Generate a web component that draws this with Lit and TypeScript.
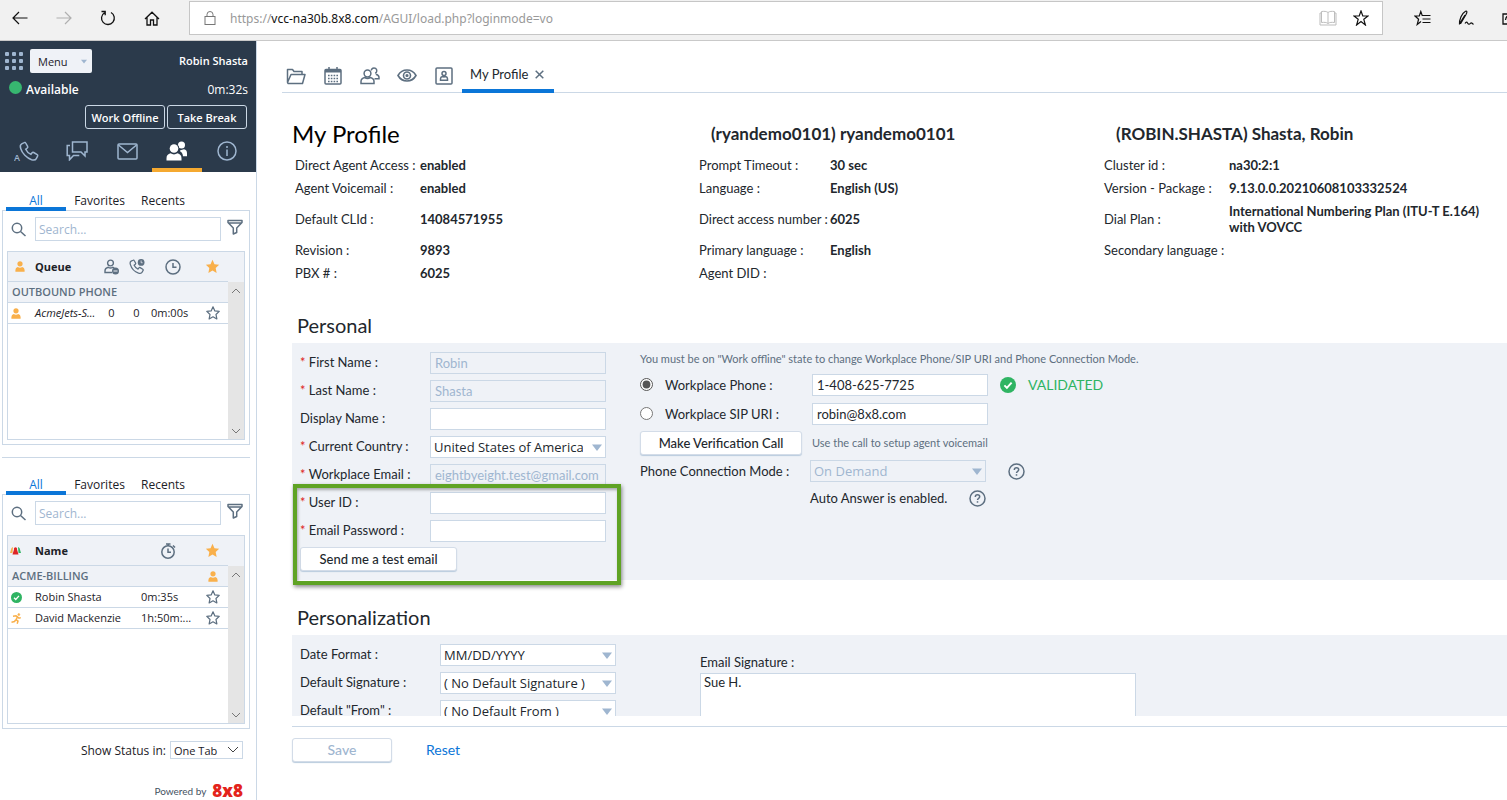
import { LitElement, html, css, svg, nothing } from "lit";
import { customElement, property } from "lit/decorators.js";

const personSolid = (cls = "") => html`<svg class="ico ${cls}" width="10" height="11" viewBox="0 0 10 11" fill="#f9b04b" aria-hidden="true"><circle cx="5" cy="2.8" r="2.6"/><path d="M.4 10.8V9a3 3 0 0 1 2.4-2.900c1.300 1 3.100 1 4.400 0A3 3 0 0 1 9.600 9v1.800z"/></svg>`;

const starPath = "M8 .9l2.1 4.7 5 .6-3.7 3.5 1 5.1L8 12.3l-4.4 2.5 1-5.1L.9 6.2l5-.6z";
const starSolid = html`<svg class="ico" width="15" height="15" viewBox="0 0 16 16" aria-hidden="true"><path d="${starPath}" fill="#f9b04b"/></svg>`;
const starLine = html`<svg class="ico" width="14" height="14" viewBox="0 0 16 16" aria-hidden="true"><path d="${starPath}" fill="none" stroke="#5d6f80" stroke-width="1.4" stroke-linejoin="round"/></svg>`;

const phonePath = "M5.2 1.6 2.7 2.8C1.2 3.6 1.1 5.6 1.7 7.5c1.4 4.8 6 9.6 10.9 11.2 2 .6 3.9.5 4.7-1.1l1.3-2.4c.3-.6.1-1.200-.4-1.500l-3.500-2.200c-.5-.3-1.200-.2-1.600.3l-1.200 1.600c-2.200-.9-4.200-2.900-5.200-5.100l1.600-1.300c.5-.4.6-1 .3-1.600L6.700 2c-.3-.6-1-.7-1.500-.4z";

const chevron = (up: boolean) => html`<svg width="10" height="6" viewBox="0 0 10 6" fill="none" stroke="#777" aria-hidden="true"><path d="${up ? "M1 5l4-4 4 4" : "M1 1l4 4 4-4"}"/></svg>`;

const triangle = html`<svg class="tri" width="10" height="7" viewBox="0 0 10 7" aria-hidden="true"><path d="M0 .5h10L5 7z" fill="#9fb6d0"/></svg>`;

const clock = html`<svg class="ico" width="16" height="16" viewBox="0 0 16 16" fill="none" stroke="#5d6f80" stroke-width="1.5" aria-hidden="true"><circle cx="8" cy="8" r="7"/><path d="M8 4v4.300h3.500"/></svg>`;

const checkDisc = (size: number) => html`<svg class="ico" width="${size}" height="${size}" viewBox="0 0 16 16" aria-hidden="true"><circle cx="8" cy="8" r="8" fill="#2fb463"/><path d="M4.400 8.400l2.500 2.500 4.700-5.200" fill="none" stroke="#fff" stroke-width="1.9"/></svg>`;

const help = html`<svg class="help" width="17" height="17" viewBox="0 0 17 17" fill="none" stroke="#5d6f80" stroke-width="1.5" role="img" aria-label="Help"><circle cx="8.500" cy="8.500" r="7.500"/><path d="M6.300 6.900c0-1.400 1-2.200 2.200-2.200s2.200.8 2.200 2c0 1.500-2.200 1.700-2.200 3.300"/><path d="M8.500 11.200v1.500"/></svg>`;

const base = css`
  * { box-sizing: border-box; }
  svg { display: block; flex: none; }
  button, input, select, textarea { font: inherit; color: inherit; margin: 0; }
  button { cursor: pointer; }
  a { text-decoration: none; }
`;

@customElement("browser-bar")
export class BrowserBar extends LitElement {
  static styles = [base, css`
    :host { display: flex; align-items: center; height: 41px; flex: none; box-sizing: border-box; background: #f1f1f1; border-bottom: 1px solid #c9c9c9; font-family: "Noto Sans", sans-serif; overflow: hidden; }
    .nav { display: flex; gap: 20px; padding: 0 0 4px 8px; width: 189px; flex: none; }
    .nav button, .tools button { width: 24px; height: 24px; padding: 0; border: 0; background: none; display: grid; place-items: center; flex: none; }
    .address { flex: 1; display: flex; align-items: center; gap: 14px; height: 34px; margin-bottom: 4px; padding: 0 13px 0 14px; background: #fff; border: 1px solid #c6c6c6; }
    .url { flex: 1; font-size: 12px; color: #999; white-space: nowrap; }
    .url b { font-weight: 400; color: #111; }
    .marks { display: flex; gap: 16px; }
    .tools { display: flex; gap: 20px; width: 124px; padding: 0 0 4px 27px; flex: none; overflow: hidden; }
  `];
  render() {
    return html`
      <div class="nav">
        <button aria-label="Back"><svg width="16" height="14" viewBox="0 0 16 14" fill="none" stroke="#111" stroke-width="1.2"><path d="M7 1L1 7l6 6M1 7h14.500"/></svg></button>
        <button aria-label="Forward"><svg width="16" height="14" viewBox="0 0 16 14" fill="none" stroke="#b0b0b0" stroke-width="1.2"><path d="M9 1l6 6-6 6M15 7H.5"/></svg></button>
        <button aria-label="Refresh"><svg width="16" height="16" viewBox="0 0 16 16" fill="none" stroke="#111" stroke-width="1.3"><path d="M4.500 2.700a6.400 6.400 0 1 0 6.500-.2M1.500 1.500h3.700v3.700"/></svg></button>
        <button aria-label="Home"><svg width="16" height="15" viewBox="0 0 16 15" fill="none" stroke="#111" stroke-width="1.3"><path d="M1 8l7-6.800L15 8M3 6.500V14h3.500V9h3v5H13V6.500"/></svg></button>
      </div>
      <div class="address">
        <svg width="12" height="14" viewBox="0 0 12 14" fill="none" stroke="#777"><rect x="1" y="5.500" width="10" height="8"/><path d="M3 5.500V3.500a3 3 0 0 1 6 0v2"/></svg>
        <span class="url">https://<b>vcc-na30b.8x8.com</b>/AGUI/load.php?loginmode=vo</span>
        <div class="marks">
          <svg width="18" height="16" viewBox="0 0 18 16" fill="none" stroke="#bdbdbd"><path d="M9 2.500C7.500 1.200 5 1.200 2.500 1.500v11c2.500-.3 5-.3 6.500 1 1.500-1.300 4-1.300 6.500-1v-11C13 1.200 10.500 1.200 9 2.500zM9 2.500v11M2.500 3H1v12h16V3h-1.500"/></svg>
          <svg width="16" height="16" viewBox="0 0 16 16" fill="none" stroke="#111" stroke-width="1.2"><path d="M8 1l1.800 5H15l-4.200 3.300L12.400 15 8 11.600 3.600 15l1.600-5.700L1 6h5.200z"/></svg>
        </div>
      </div>
      <div class="tools">
        <button aria-label="Favorites"><svg width="17" height="16" viewBox="0 0 17 16" fill="none" stroke="#111" stroke-width="1.2"><path d="M10 5.500H8.200L6.800 1.500 5.300 6H1l3.600 3.200L3.200 14.500 7 11.500M9 5.500h7.500M8.500 9h8M8.500 12.500h8"/></svg></button>
        <button aria-label="Notes"><svg width="18" height="16" viewBox="0 0 18 16" fill="none" stroke="#111" stroke-width="1.2"><path d="M2.500 14.500C2 10 5 3 8.500 1.200c2-.7 1.500 1.500.5 3.300L4 13c-1 1.200-1-.5.500-2.500L8 5M8 13.500c1.200-2 2-1.500 2.700-.3s1.800 1.300 2.600.3 2-.5 3.200 1"/></svg></button>
        <button aria-label="Share"><svg width="16" height="14" viewBox="0 0 16 14" fill="none" stroke="#111" stroke-width="1.3"><path d="M5 3H1v10h13V8M3.500 9c.5-4 3-5.500 7-5.500M8 .5l3.500 3L8 6.500"/></svg></button>
      </div>`;
  }
}

interface Member { icon: unknown; cells: string[]; }

@customElement("contact-panel")
export class ContactPanel extends LitElement {
  @property() kind: "queue" | "agents" = "queue";
  static styles = [base, css`
    :host { display: block; padding: 0 6px 0 2px; font-size: 12px; color: #1c2127; }
    .tabs { display: flex; height: 17px; padding-left: 4px; }
    .tabs button { border: 0; padding: 0; background: none; line-height: 13px; width: 67px; text-align: center; border-bottom: 4px solid transparent; }
    .tabs .on { width: 60px; color: #0b76d8; border-color: #0b76d8; }
    .tabs .last { width: 60px; }
    .frame { border: 1px solid #cbd8e6; padding: 6px 4px 4px; margin-top: -1px; height: 235px; display: flex; flex-direction: column; gap: 10px; }
    .search { display: grid; grid-template-columns: 28px 1fr 24px; align-items: center; }
    .search .glass { margin-left: 4px; }
    .search input { height: 24px; width: 100%; border: 1px solid #cbd8e6; padding: 0 3px; outline: 0; background: #fff; }
    .search input::placeholder { color: #9fb6d0; opacity: 1; }
    .search button { border: 0; background: none; padding: 0 0 4px 6px; }
    .box { flex: 1; display: grid; grid-template-columns: 1fr; grid-template-rows: 1fr; border: 1px solid #cbd8e6; }
    table { grid-area: 1 / 1; align-self: start; width: 100%; table-layout: fixed; border-collapse: separate; border-spacing: 0; font-size: 11px; }
    th { height: 30px; background: #eff2f7; padding: 0; text-align: left; border-bottom: 1px solid #cbd8e6; }
    th:last-child { border-bottom: 0; }
    td { height: 21px; padding: 0; border-bottom: 1px solid #cbd8e6; white-space: nowrap; line-height: 20px; }
    td:last-child { border-bottom: 0; }
    .group td { background: #eff2f7; }
    .group td:first-child { color: #5d6f80; font-weight: 600; padding-left: 4px; }
    .mid { text-align: center; }
    .mid .ico { margin: 0 auto; }
    .lead .ico { margin-left: 3px; }
    th.lead .ico { margin-left: 7px; }
    th.lead .wide { margin-left: 2px; }
    .name { padding-left: 3px; }
    .italic { font-style: italic; }
    .time { padding-left: 2px; }
    .track { grid-area: 1 / 1; justify-self: end; width: 16px; margin-top: 30px; background: #e5e5e5; display: flex; flex-direction: column; justify-content: space-between; }
    .track button { border: 0; background: none; padding: 0; height: 17px; display: grid; place-items: center; }
    .c16 { width: 16px; } .c24 { width: 24px; } .c25 { width: 25px; } .c31 { width: 31px; } .c48 { width: 48px; } .c58 { width: 58px; }
  `];

  private queueTable() {
    return html`<table>
      <colgroup><col class="c24"><col><col class="c25"><col class="c25"><col class="c48"><col class="c31"><col class="c16"></colgroup>
      <thead><tr>
        <th class="lead">${personSolid()}</th>
        <th class="name">Queue</th>
        <th class="mid"><svg class="ico" width="15" height="16" viewBox="0 0 15 16" fill="none" stroke="#5d6f80" stroke-width="1.4"><circle cx="6.500" cy="4" r="2.900"/><path d="M8 13.500H1v-1.800C1 9.500 2.800 8.700 4.300 8.300c1.400.8 3 .8 4.400 0l1.600.6"/><circle cx="11.500" cy="12" r="3.500" fill="#5d6f80" stroke="none"/><path d="M9.500 12h4" stroke="#eff2f7" stroke-width="1"/></svg></th>
        <th class="mid"><svg class="ico" width="16" height="15" viewBox="0 0 21 20" fill="none" stroke="#5d6f80" stroke-width="1.7"><path d="${phonePath}"/><circle cx="16" cy="4.500" r="4.500" fill="#5d6f80" stroke="none"/><path d="M16 2v3h2" stroke="#eff2f7" stroke-width="1"/></svg></th>
        <th class="mid">${clock}</th>
        <th class="mid">${starSolid}</th>
        <th></th>
      </tr></thead>
      <tbody>
        <tr class="group"><td colspan="6">OUTBOUND PHONE</td><td></td></tr>
        <tr><td class="lead">${personSolid()}</td><td class="name italic">AcmeJets-S...</td><td class="mid">0</td><td class="mid">0</td><td class="time">0m:00s</td><td class="mid">${starLine}</td><td></td></tr>
      </tbody></table>`;
  }

  private agentTable() {
    const runner = html`<svg class="ico" width="11" height="11" viewBox="0 0 11 11" fill="none" stroke="#f9b04b" stroke-width="1.5"><circle cx="7.800" cy="1.600" r="1" fill="#f9b04b" stroke-width=".6"/><path d="M2 3.200l3-.4 1.500 1L5 6.700l2 1.300-.8 2.700M4.600 7L3.500 8.500.5 9.200M6.500 4l1.500 1.200 1.800-.6"/></svg>`;
    const rows: Member[] = [
      { icon: checkDisc(11), cells: ["Robin Shasta", "0m:35s"] },
      { icon: runner, cells: ["David Mackenzie", "1h:50m:..."] },
    ];
    return html`<table>
      <colgroup><col class="c24"><col><col class="c58"><col class="c31"><col class="c16"></colgroup>
      <thead><tr>
        <th class="lead"><svg class="ico wide" width="11" height="9" viewBox="0 0 11 9"><path d="M0 7L1.500 2 3 1 2.500 7z" fill="#f9b04b"/><path d="M11 7L9.500 2 8 1l.5 6z" fill="#2fb463"/><path d="M2.500 8.500L4 3.500a1.600 1.600 0 1 1 3 0l1.500 5z" fill="#dd2525"/></svg></th>
        <th class="name">Name</th>
        <th class="mid"><svg class="ico" width="15" height="16" viewBox="0 0 15 16" fill="none" stroke="#5d6f80" stroke-width="1.5"><circle cx="7" cy="9" r="6.200"/><path d="M7 5.500V9.300h3M5 1h4.500M7.200 1v2M12 2.500l2 2"/></svg></th>
        <th class="mid">${starSolid}</th>
        <th></th>
      </tr></thead>
      <tbody>
        <tr class="group"><td colspan="3">ACME-BILLING</td><td class="mid">${personSolid()}</td><td></td></tr>
        ${rows.map((r) => html`<tr><td class="lead">${r.icon}</td><td class="name">${r.cells[0]}</td><td class="time">${r.cells[1]}</td><td class="mid">${starLine}</td><td></td></tr>`)}
      </tbody></table>`;
  }

  render() {
    return html`
      <div class="tabs"><button class="on">All</button><button>Favorites</button><button class="last">Recents</button></div>
      <div class="frame">
        <div class="search">
          <svg class="glass" width="15" height="15" viewBox="0 0 15 15" fill="none" stroke="#5d6f80" stroke-width="1.5"><circle cx="6" cy="6" r="4.700"/><path d="M9.500 9.500l5 4.500"/></svg>
          <input type="text" placeholder="Search..." aria-label="Search">
          <button aria-label="Filter"><svg width="16" height="16" viewBox="0 0 16 16" fill="none" stroke="#5d6f80" stroke-width="1.5" stroke-linejoin="round"><path d="M1 1.500h14v2L9.700 9v4.500L6.300 15V9L1 3.500zM1 4h14"/></svg></button>
        </div>
        <div class="box">
          ${this.kind === "queue" ? this.queueTable() : this.agentTable()}
          <div class="track"><button aria-label="Scroll up">${chevron(true)}</button><button aria-label="Scroll down">${chevron(false)}</button></div>
        </div>
      </div>`;
  }
}

@customElement("agent-sidebar")
export class AgentSidebar extends LitElement {
  static styles = [base, css`
    :host { display: flex; flex-direction: column; box-sizing: border-box; width: 257px; flex: none; border-right: 1px solid #cbd8e6; background: #fff; font-family: "Open Sans", sans-serif; font-size: 12px; color: #1c2127; }
    .head { background: #2b3a4b; color: #fff; height: 131px; padding: 8px 8px 0 2px; display: flex; flex-direction: column; flex: none; }
    .row { display: flex; align-items: center; }
    .grid { margin: 0 7px 0 3px; }
    .menu { display: flex; align-items: center; justify-content: space-between; width: 62px; height: 24px; padding: 0 5px 0 8px; border: 0; border-radius: 2px; background: #eff2f7; color: #1c2127; font-size: 11px; }
    .menu .tri { width: 6px; height: 5px; }
    .who { margin-left: auto; padding-bottom: 2px; font-size: 11px; font-weight: 600; }
    .status { margin-top: 6px; height: 20px; }
    .dot { width: 13px; height: 13px; border-radius: 50%; background: #37b670; margin: 0 4px 4px 7px; }
    .status b { font-weight: 600; }
    .status time { margin-left: auto; }
    .actions { justify-content: flex-end; gap: 2px; margin: 6px 0 0; padding-right: 1px; }
    .actions button { width: 80px; height: 24px; padding: 0; border: 1px solid #cbd8e6; border-radius: 3px; background: none; font-weight: 600; font-size: 11px; white-space: nowrap; }
    .channels { display: flex; margin-top: auto; }
    .channels button { width: 50px; flex: none; height: 38px; border: 0; border-bottom: 4px solid transparent; background: none; padding: 0; display: grid; place-items: center; color: #9fb6d0; }
    .channels .on { border-color: #f5a930; color: #fff; }
    .channels text { font: 600 9px "Open Sans", sans-serif; }
    .lists { display: flex; flex-direction: column; padding-top: 22px; }
    .lists hr { border: 0; border-top: 1px solid #cbd8e6; margin: 12px 6px 20px 2px; }
    .show { display: flex; justify-content: flex-end; align-items: center; gap: 4px; margin: 12px 13px 0 0; }
    .pick { display: grid; align-items: center; width: 73px; }
    .pick select { grid-area: 1 / 1; appearance: none; width: 100%; height: 18px; padding: 0 3px; border: 1px solid #cbd8e6; border-radius: 0; background: #fff; font-size: 11px; }
    .pick svg { grid-area: 1 / 1; justify-self: end; margin-right: 4px; pointer-events: none; }
    .power { display: flex; align-items: center; justify-content: flex-end; gap: 6px; margin: 22px 13px 0 0; height: 19px; line-height: 14px; font-family: Lato, sans-serif; font-size: 10px; color: #45525f; }
    .logo { font: 800 17px "Open Sans", sans-serif; line-height: 19px; color: #e3231b; }
  `];
  render() {
    return html`
      <header class="head">
        <div class="row">
          <svg class="grid" width="18" height="18" viewBox="0 0 18 18" fill="#9fb6d0" aria-hidden="true">${[0, 7, 14].map((y) => [0, 7, 14].map((x) => svg`<rect x="${x}" y="${y}" width="4" height="4" rx="1"/>`))}</svg>
          <button class="menu">Menu ${triangle}</button>
          <span class="who">Robin Shasta</span>
        </div>
        <div class="row status"><span class="dot"></span><b>Available</b><time>0m:32s</time></div>
        <div class="row actions"><button>Work Offline</button><button>Take Break</button></div>
        <nav class="channels">
          <button aria-label="Phone"><svg width="26" height="23" viewBox="0 0 26 23" fill="none" stroke="currentColor" stroke-width="1.5"><g transform="translate(5 1)"><path d="${phonePath}"/></g><text x="0" y="21" fill="currentColor" stroke="none">A</text></svg></button>
          <button aria-label="Chat"><svg width="22" height="20" viewBox="0 0 22 20" fill="none" stroke="currentColor" stroke-width="1.5"><path d="M6.500 1H21v10h-2v4l-4-4H6.500zM4 4.500H1.200v10H3.500v4.300l4-4.300h5.800"/></svg></button>
          <button aria-label="Email"><svg width="21" height="17" viewBox="0 0 21 17" fill="none" stroke="currentColor" stroke-width="1.5"><rect x="1" y="1" width="19" height="15" rx="1"/><path d="M1.500 2l9 7.500 9-7.500"/></svg></button>
          <button class="on" aria-label="Contacts"><svg width="22" height="20" viewBox="0 0 22 20" fill="currentColor"><circle cx="15.500" cy="4" r="3.500"/><path d="M14 9.500C16 9 16.500 8.500 18 8.300c2 .5 3 1.700 3 4v3h-4c0-2-1.300-4.200-3-5z"/><circle cx="8" cy="7.500" r="5.300" fill="#2b3a4b"/><circle cx="8" cy="7.500" r="4.300"/><path d="M.5 19.500v-2.300C.5 14.500 2 13 4.500 12.300c2 1.500 5 1.500 7 0 2.500.7 4 2.200 4 4.900v2.300z"/></svg></button>
          <button aria-label="Information"><svg width="20" height="20" viewBox="0 0 20 20" fill="none" stroke="currentColor" stroke-width="1.5"><circle cx="10" cy="10" r="9"/><path d="M10 8.500v6.500M10 5v2"/></svg></button>
        </nav>
      </header>
      <div class="lists">
        <contact-panel kind="queue"></contact-panel>
        <hr>
        <contact-panel kind="agents"></contact-panel>
      </div>
      <div class="show">
        <label for="show">Show Status in:</label>
        <span class="pick"><select id="show"><option>One Tab</option></select><svg width="12" height="8" viewBox="0 0 12 8" fill="none" stroke="#444"><path d="M1 1l5 5 5-5"/></svg></span>
      </div>
      <footer class="power">Powered by <span class="logo">8x8</span></footer>`;
  }
}

interface Field { id: string; label: string; value?: string; required?: boolean; disabled?: boolean; select?: boolean; password?: boolean; }

@customElement("profile-page")
export class ProfilePage extends LitElement {
  static styles = [base, css`
    :host { display: flex; flex-direction: column; flex: 1; min-width: 0; background: #fff; font-family: Lato, sans-serif; font-size: 13px; line-height: 16px; color: #22272d; }
    .tabs { display: flex; align-items: flex-end; height: 52px; margin-left: 25px; border-bottom: 1px solid #cbd8e6; flex: none; }
    .tabs .icon { width: 37px; height: 33px; padding: 0 10px 0 0; border: 0; background: none; display: grid; place-items: center; color: #5d6f80; }
    .tabs .page { display: flex; align-items: center; gap: 7px; margin: 0 0 -1px -5px; padding: 0 8px; height: 34px; width: 92px; border-bottom: 4px solid #0b76d8; white-space: nowrap; }
    .page button { padding: 0; border: 0; background: none; }
    .body { flex: 1; min-height: 0; overflow: hidden; padding-left: 35px; }
    .info { display: grid; grid-template-columns: 404px 405px 1fr; padding: 26px 4px 0 3px; }
    .info h1, .info h2 { margin: 0 0 5px; height: 29px; line-height: 29px; white-space: nowrap; }
    .info h1 { font-size: 24px; font-weight: 400; color: #000; margin-left: -3px; }
    .info h2 { font-size: 17px; font-weight: 700; margin-left: 12px; }
    dl { margin: 0; display: grid; grid-template-columns: 125px 1fr; grid-template-rows: 23px 23px 39px 23px 23px; align-items: center; }
    dl.mid { grid-template-columns: 131px 1fr; }
    dt, dd { margin: 0; white-space: nowrap; }
    dd { font-weight: 700; white-space: normal; }
    h3 { margin: 0; padding-left: 5px; font-size: 20px; line-height: 24px; font-weight: 400; }
    .first { margin-top: 29px; }
    .next { margin-top: 25px; }
    .panel { background: #eff2f7; margin-top: 6px; padding: 9px 8px 0; display: grid; }
    .personal { grid-template-columns: 340px 1fr; height: 237px; }
    .prefs { grid-template-columns: 400px 1fr; }
    .fields { display: grid; grid-auto-rows: 22px; row-gap: 6px; grid-template-columns: 130px 176px; align-items: center; align-content: start; }
    .prefs .fields { grid-template-columns: 140px 176px; }
    .fields label { white-space: nowrap; padding-bottom: 2px; }
    .req { color: #d22; }
    input[type="text"], input[type="password"], .drop select { width: 176px; height: 22px; padding: 0 4px; border: 1px solid #cbd8e6; border-radius: 0; background: #fff; outline: 0; }
    input:disabled, .drop select:disabled { color: #9fb6d0; background: #eff2f7; opacity: 1; }
    .drop { display: grid; align-items: center; width: 176px; }
    .drop select { grid-area: 1 / 1; appearance: none; padding: 0 22px 0 3px; font-family: "Open Sans", sans-serif; }
    .drop svg { grid-area: 1 / 1; justify-self: end; margin-right: 4px; pointer-events: none; }
    .btn { height: 24px; padding: 0; border: 1px solid #d3dce8; border-radius: 3px; background: #fff; box-shadow: 0 1px 1px #b9cbdd; white-space: nowrap; font-weight: 500; }
    .send { width: 157px; grid-column: 1 / -1; }
    .phone { display: grid; grid-template-columns: 25px 147px 176px 1fr; align-items: center; align-content: start; grid-template-rows: 18px 29px 29px 29px 28px 26px; }
    .note { grid-column: 1 / -1; align-self: start; line-height: 14px; font-size: 11px; color: #5d6f80; }
    .phone input[type="radio"] { width: 13px; height: 13px; accent-color: #555; }
    .call { grid-column: 1 / 3; width: 162px; }
    .small { grid-column: 3 / -1; font-size: 11px; color: #5d6f80; }
    .mode { grid-column: 1 / 3; white-space: nowrap; }
    .conn { grid-column: 3 / -1; display: flex; align-items: center; margin-left: -2px; gap: 22px; }
    .valid { display: flex; align-items: center; gap: 12px; margin-left: 12px; color: #2fb463; font-size: 14px; }
    .sig { display: flex; flex-direction: column; padding-top: 10px; gap: 3px; }
    .sig textarea { width: 436px; height: 110px; resize: none; border: 1px solid #cbd8e6; border-radius: 0; padding: 0 3px; background: #fff; line-height: 16px; }
    .mark { position: absolute; left: -7px; right: -15px; top: -8px; bottom: -15px; border: 4px solid #5fa324; box-shadow: 1px 2px 4px rgba(0, 0, 0, .45), inset 1px 2px 3px rgba(0, 0, 0, .3); pointer-events: none; }
    .mail { position: relative; align-self: start; grid-column: 1 / -1; grid-row: span 3; display: grid; grid-template-columns: subgrid; grid-auto-rows: 22px; row-gap: 6px; align-items: center; }
    .foot { display: flex; align-items: flex-start; gap: 34px; height: 74px; margin: 10px 0 0 35px; padding-top: 11px; border-top: 1px solid #cbd8e6; flex: none; font-size: 14px; }
    .save { width: 100px; color: #9fb6d0; }
    .foot a { color: #0b76d8; line-height: 24px; }
  `];

  private field(f: Field) {
    return html`<label for=${f.id}>${f.required ? html`<span class="req">*</span> ` : nothing}${f.label} :</label>
      ${f.select
        ? html`<span class="drop"><select id=${f.id}><option>${f.value}</option></select>${triangle}</span>`
        : html`<input id=${f.id} type=${f.password ? "password" : "text"} .value=${f.value ?? ""} ?disabled=${f.disabled ?? false}>`}`;
  }

  private facts(cls: string, items: [string, string][]) {
    return html`<dl class=${cls}>${items.map(([k, v]) => html`<dt>${k} :</dt><dd>${v}</dd>`)}</dl>`;
  }

  render() {
    return html`
      <nav class="tabs">
        <button class="icon" aria-label="Files"><svg width="20" height="18" viewBox="0 0 20 18" fill="none" stroke="currentColor" stroke-width="1.5" stroke-linejoin="round"><path d="M1.500 15V2.500h5l1.500 2h8v3M1.500 15.500l3.500-8h14l-2.500 9H2.200z"/></svg></button>
        <button class="icon" aria-label="Calendar"><svg width="18" height="18" viewBox="0 0 18 18" fill="none" stroke="currentColor" stroke-width="1.5"><rect x="1" y="2.500" width="16" height="14.500" rx="1"/><path d="M1 4h16" stroke-width="3"/><path d="M5 0v4M13 0v4"/><path d="M4 8.500h11M4 11.500h11M4 14.500h11" stroke-dasharray="1.6 1.2"/></svg></button>
        <button class="icon" aria-label="Contacts"><svg width="20" height="19" viewBox="0 0 20 19" fill="none" stroke="currentColor" stroke-width="1.5"><circle cx="7.500" cy="7.500" r="3.400"/><path d="M1 17.500v-2c0-2.300 1.500-3.500 3.700-4 1.700 1.100 3.900 1.100 5.600 0 2.200.5 3.700 1.700 3.700 4v2zM11.200 4.500a2.800 2.800 0 1 1 4 2.800M15.800 8.200c2 .4 3.200 1.500 3.200 3.300v1.300h-4.500"/></svg></button>
        <button class="icon" aria-label="Watch"><svg width="20" height="13" viewBox="0 0 20 13" fill="none" stroke="currentColor" stroke-width="1.6"><path d="M1 6.500C3 3 6 1 10 1s7 2 9 5.500C17 10 14 12 10 12S3 10 1 6.500z"/><circle cx="10" cy="6.500" r="3.500"/><circle cx="10" cy="6.500" r=".8" fill="currentColor"/></svg></button>
        <button class="icon" aria-label="Profile"><svg width="18" height="18" viewBox="0 0 18 18" fill="none" stroke="currentColor" stroke-width="1.5"><rect x="1" y="1" width="16" height="16" rx="1"/><circle cx="9" cy="6.500" r="2"/><path d="M5.500 13.300v-1.500c0-1.300.8-2 2-2.300 1 .5 2 .5 3 0 1.200.3 2 1 2 2.300v1.500z"/></svg></button>
        <div class="page">My Profile<button aria-label="Close tab"><svg width="9" height="9" viewBox="0 0 9 9" stroke="#5d6f80" stroke-width="1.5"><path d="M.7.7l7.600 7.600M8.300.7L.7 8.300"/></svg></button></div>
      </nav>
      <main class="body">
        <section class="info">
          <div><h1>My Profile</h1>${this.facts("", [["Direct Agent Access", "enabled"], ["Agent Voicemail", "enabled"], ["Default CLId", "14084571955"], ["Revision", "9893"], ["PBX #", "6025"]])}</div>
          <div><h2>(ryandemo0101) ryandemo0101</h2>${this.facts("mid", [["Prompt Timeout", "30 sec"], ["Language", "English (US)"], ["Direct access number", "6025"], ["Primary language", "English"], ["Agent DID", ""]])}</div>
          <div><h2>(ROBIN.SHASTA) Shasta, Robin</h2>${this.facts("", [["Cluster id", "na30:2:1"], ["Version - Package", "9.13.0.0.20210608103332524"], ["Dial Plan", "International Numbering Plan (ITU-T E.164) with VOVCC"], ["Secondary language", ""]])}</div>
        </section>
        <h3 class="first">Personal</h3>
        <section class="panel personal">
          <div class="fields">
            ${this.field({ id: "first", label: "First Name", value: "Robin", required: true, disabled: true })}
            ${this.field({ id: "last", label: "Last Name", value: "Shasta", required: true, disabled: true })}
            ${this.field({ id: "display", label: "Display Name" })}
            ${this.field({ id: "country", label: "Current Country", value: "United States of America", required: true, select: true })}
            ${this.field({ id: "email", label: "Workplace Email", value: "eightbyeight.test@gmail.com", required: true, disabled: true })}
            <div class="mail">
              ${this.field({ id: "user", label: "User ID", required: true })}
              ${this.field({ id: "pass", label: "Email Password", required: true, password: true })}
              <button class="btn send">Send me a test email</button>
              <span class="mark"></span>
            </div>
          </div>
          <div class="phone">
            <span class="note">You must be on "Work offline" state to change Workplace Phone/SIP URI and Phone Connection Mode.</span>
            <input type="radio" name="kind" id="r1" checked><label for="r1">Workplace Phone :</label><input type="text" aria-label="Workplace Phone" value="1-408-625-7725"><span class="valid">${checkDisc(16)}VALIDATED</span>
            <input type="radio" name="kind" id="r2"><label for="r2">Workplace SIP URI :</label><input type="text" aria-label="Workplace SIP URI" value="robin@8x8.com"><span></span>
            <button class="btn call">Make Verification Call</button><span class="small">Use the call to setup agent voicemail</span>
            <label class="mode" for="mode">Phone Connection Mode :</label><span class="conn"><span class="drop"><select id="mode" disabled><option>On Demand</option></select>${triangle}</span>${help}</span>
            <span class="conn">Auto Answer is enabled. ${help}</span>
          </div>
        </section>
        <h3 class="next">Personalization</h3>
        <section class="panel prefs">
          <div class="fields">
            ${this.field({ id: "date", label: "Date Format", value: "MM/DD/YYYY", select: true })}
            ${this.field({ id: "dsig", label: "Default Signature", value: "( No Default Signature )", select: true })}
            ${this.field({ id: "dfrom", label: "Default \"From\"", value: "( No Default From )", select: true })}
          </div>
          <div class="sig"><label for="sig">Email Signature :</label><textarea id="sig" .value=${"Sue H."}></textarea></div>
        </section>
      </main>
      <footer class="foot"><button class="btn save" disabled>Save</button><a href="#">Reset</a></footer>`;
  }
}

@customElement("app-root")
export class AppRoot extends LitElement {
  static styles = css`
    :host { display: flex; flex-direction: column; height: 100vh; overflow: hidden; background: #fff; }
    .work { flex: 1; min-height: 0; display: flex; }
  `;
  render() {
    return html`<browser-bar></browser-bar><div class="work"><agent-sidebar></agent-sidebar><profile-page></profile-page></div>`;
  }
}
